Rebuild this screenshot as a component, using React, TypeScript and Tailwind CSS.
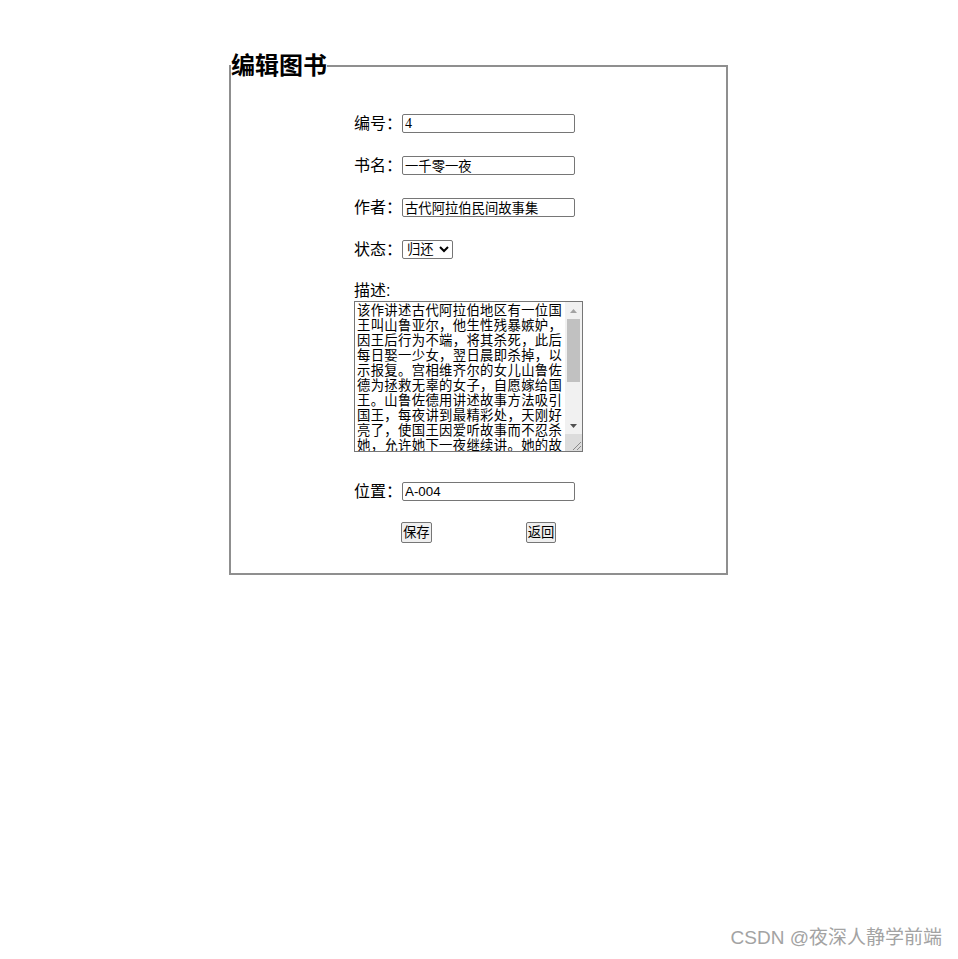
import React from "react";

const desc =
  "该作讲述古代阿拉伯地区有一位国王叫山鲁亚尔，他生性残暴嫉妒，因王后行为不端，将其杀死，此后每日娶一少女，翌日晨即杀掉，以示报复。宫相维齐尔的女儿山鲁佐德为拯救无辜的女子，自愿嫁给国王。山鲁佐德用讲述故事方法吸引国王，每夜讲到最精彩处，天刚好亮了，使国王因爱听故事而不忍杀她，允许她下一夜继续讲。她的故事一直讲了一千零一夜，国王终于被感动，与她白头偕老。";

const inputCls =
  "h-[19px] w-[173px] border border-[#767676] rounded-[2px] px-[2px] text-[13.33px] leading-[15px] text-black bg-white outline-none";

function Row({ label, children, className = "" }: { label: string; children: React.ReactNode; className?: string }) {
  return (
    <div className={`flex items-center h-[19px] ${className}`}>
      <span className="w-[48px] text-[16px] leading-[19px] text-black">{label}</span>
      {children}
    </div>
  );
}

// textarea with a classic (always visible) scrollbar and resize grip
function DescBox() {
  return (
    <div className="flex w-[229px] h-[151px] border border-[#767676] bg-white">
      <textarea
        className="flex-1 h-full px-[2px] py-0 text-[13.33px] leading-[15px] tracking-[0.35px] text-black bg-white resize-none overflow-hidden font-['Noto_Sans_CJK_SC',sans-serif] outline-none"
        defaultValue={desc}
      />
      <div className="flex w-[17px] flex-col bg-[#f1f1f1]">
        <div className="flex h-[17px] items-center justify-center">
          <svg width="7" height="4" viewBox="0 0 7 4">
            <path d="M0 4 L3.5 0 L7 4 Z" fill="#a3a3a3" />
          </svg>
        </div>
        <div className="flex-1">
          <div className="mx-[2px] h-[63px] bg-[#c1c1c1]" />
        </div>
        <div className="flex h-[17px] items-center justify-center">
          <svg width="7" height="4" viewBox="0 0 7 4">
            <path d="M0 0 L7 0 L3.5 4 Z" fill="#505050" />
          </svg>
        </div>
        <div className="flex h-[17px] items-end justify-end bg-[#dcdcdc]">
          <svg width="12" height="12" viewBox="0 0 12 12">
            <path d="M11 3 L3 11 M11 7 L7 11" stroke="#8a8a8a" strokeWidth="1" />
          </svg>
        </div>
      </div>
    </div>
  );
}

export default function App() {
  return (
    <div className="relative w-[958px] h-[959px] bg-white font-['Liberation_Sans','Noto_Sans_CJK_SC',sans-serif] overflow-hidden">
      <fieldset className="ml-[229px] mt-[52px] w-[499px] border-2 border-[#8f8f8f]">
        <legend className="text-[24px] font-bold leading-[28px] text-black">编辑图书</legend>
        <div className="flex flex-col pl-[123px] pt-[34px] pb-[30px]">
          <Row label="编号：">
            <input className={`${inputCls} text-[14px] font-['Liberation_Serif','Noto_Sans_CJK_SC',serif]`} defaultValue="4" />
          </Row>
          <Row label="书名：" className="mt-[23px]">
            <input className={inputCls} defaultValue="一千零一夜" />
          </Row>
          <Row label="作者：" className="mt-[23px]">
            <input className={inputCls} defaultValue="古代阿拉伯民间故事集" />
          </Row>
          <Row label="状态：" className="mt-[23px]">
            <select
              className="h-[19px] w-[51px] border border-[#767676] rounded-[2px] text-[13.33px] leading-[15px] text-black bg-white"
              defaultValue="归还"
            >
              <option>借出</option>
              <option>归还</option>
            </select>
          </Row>
          <div className="mt-[21px] h-[21px] text-[16px] leading-[21px] text-black">描述:</div>
          <DescBox />
          <Row label="位置：" className="mt-[30px]">
            <input className={inputCls} defaultValue="A-004" />
          </Row>
          <div className="mt-[21px] flex items-center pl-[47px] gap-[94px]">
            <button className="h-[21px] px-[1px] border border-[#767676] rounded-[2px] bg-[#efefef] text-[13.33px] leading-[17px] text-black">
              保存
            </button>
            <button className="h-[21px] px-[1px] border border-[#767676] rounded-[2px] bg-[#efefef] text-[13.33px] leading-[17px] text-black">
              返回
            </button>
          </div>
        </div>
      </fieldset>
      <div className="absolute right-[16px] bottom-[10px] text-[19px] leading-[22px] text-[#a3a3a3]">CSDN @夜深人静学前端</div>
    </div>
  );
}
